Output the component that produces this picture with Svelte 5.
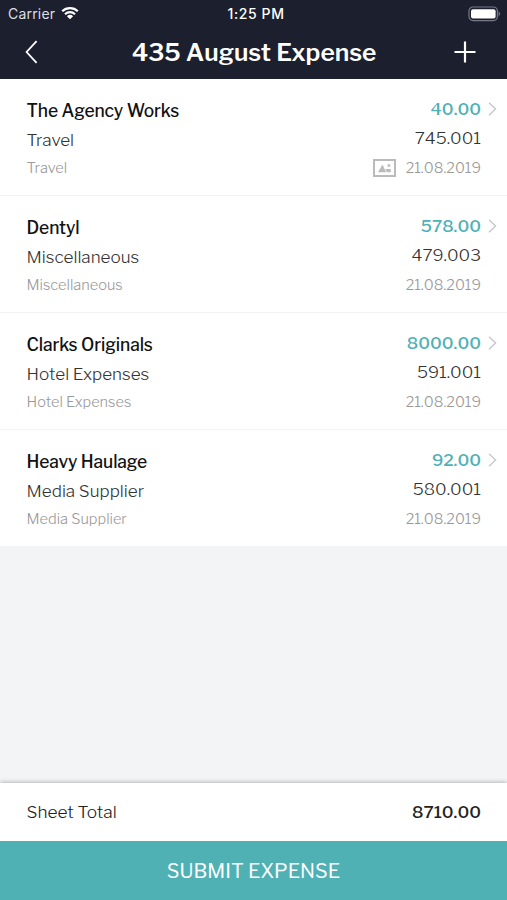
<script lang="ts">
  interface Expense {
    supplier: string;
    category: string;
    note: string;
    amount: string;
    code: string;
    date: string;
    hasImage?: boolean;
  }

  const title = '435 August Expense';

  const expenses: Expense[] = [
    { supplier: 'The Agency Works', category: 'Travel', note: 'Travel', amount: '40.00', code: '745.001', date: '21.08.2019', hasImage: true },
    { supplier: 'Dentyl', category: 'Miscellaneous', note: 'Miscellaneous', amount: '578.00', code: '479.003', date: '21.08.2019' },
    { supplier: 'Clarks Originals', category: 'Hotel Expenses', note: 'Hotel Expenses', amount: '8000.00', code: '591.001', date: '21.08.2019' },
    { supplier: 'Heavy Haulage', category: 'Media Supplier', note: 'Media Supplier', amount: '92.00', code: '580.001', date: '21.08.2019' }
  ];

  const total = expenses.reduce((sum, e) => sum + Number(e.amount), 0).toFixed(2);
</script>

<div class="screen">
  <header>
    <div class="status">
      <div class="carrier">
        <span>Carrier</span>
        <svg class="wifi" width="18" height="14" viewBox="0 0 18 14">
          <path d="M1.2 5.2a11.2 11.2 0 0 1 15.6 0M4 8.2a7.2 7.2 0 0 1 10 0" />
          <path class="dot" d="M5.9 10.2a4.6 4.6 0 0 1 6.2 0L9 13.3z" />
        </svg>
      </div>
      <span class="time">1:25 PM</span>
      <svg class="battery" width="33" height="16" viewBox="0 0 33 16">
        <rect class="case" x="1" y="1" width="28.4" height="13.6" rx="4" />
        <rect class="level" x="3" y="3.2" width="24.6" height="9.4" rx="2" />
        <path class="cap" d="M30.6 5.2q3 2.6 0 5.2z" />
      </svg>
    </div>
    <nav>
      <button class="back" aria-label="Back">
        <svg width="14" height="24" viewBox="0 0 14 24"><path d="M11.6 1.2 1.6 12l10 10.8" /></svg>
      </button>
      <h1>{title}</h1>
      <button class="add" aria-label="Add">
        <svg width="22" height="22" viewBox="0 0 22 22"><path d="M11 .5v21M.5 11h21" /></svg>
      </button>
    </nav>
  </header>

  <ul>
    {#each expenses as expense}
      <li>
        <div class="info">
          <span class="supplier">{expense.supplier}</span>
          <span class="category">{expense.category}</span>
          <span class="note">{expense.note}</span>
        </div>
        <div class="figures">
          <span class="amount">{expense.amount}</span>
          <span class="code">{expense.code}</span>
          <span class="date">
            {#if expense.hasImage}
              <svg width="23" height="18" viewBox="0 0 23 18">
                <rect x="1" y="1" width="21" height="16" />
                <path d="M5 13.2 9.4 5.4l3.8 7.8zM12.5 10h5.3v3.2h-4zM14.6 5.2h2.6v2.6h-2.6z" />
              </svg>
            {/if}
            <span>{expense.date}</span>
          </span>
        </div>
        <svg class="chevron" width="9" height="14" viewBox="0 0 9 14"><path d="m1 .8 6.6 6.2L1 13.2" /></svg>
      </li>
    {/each}
  </ul>

  <footer>
    <div class="total">
      <span class="label">Sheet Total</span>
      <span class="sum">{total}</span>
    </div>
    <button class="submit">SUBMIT EXPENSE</button>
  </footer>
</div>

<style>
  :global(body) {
    margin: 0;
  }

  .screen {
    display: flex;
    flex-direction: column;
    height: 900px;
    background: #f2f4f6;
    font-family: 'Libre Franklin', Inter, sans-serif;
    color: #222;
    overflow: hidden;
  }

  button {
    padding: 0;
    border: none;
    background: none;
    color: inherit;
    font: inherit;
  }

  svg {
    display: block;
    fill: none;
  }

  header {
    height: 79px;
    background: #1c1f2e;
    color: #fff;
  }

  .status {
    display: grid;
    grid-template-columns: 1fr auto 1fr;
    align-items: center;
    height: 28px;
    padding: 0 6px 0 8px;
    font-family: Inter, sans-serif;
    font-size: 14px;
    line-height: 28px;
  }

  .carrier {
    display: flex;
    align-items: center;
    gap: 7px;
    color: #dddfe4;
    letter-spacing: 0.2px;
  }

  .wifi {
    stroke: #fff;
    stroke-width: 2.2;
    margin: -3px 0 0 -1px;
  }

  .wifi .dot {
    fill: #fff;
    stroke: none;
  }

  .time {
    margin-right: -3px;
    font-weight: 500;
    font-size: 14px;
    letter-spacing: 0.6px;
  }

  .battery {
    justify-self: end;
  }

  .case {
    stroke: #777986;
    stroke-width: 1.2;
  }

  .level {
    fill: #fff;
  }

  .cap {
    fill: #777986;
  }

  nav {
    display: grid;
    grid-template-columns: 1fr auto 1fr;
    align-items: center;
    height: 48px;
    padding: 0 31px 0 25px;
  }

  nav svg {
    margin-top: -1px;
    stroke: #fff;
    stroke-width: 1.8;
  }

  .back {
    justify-self: start;
  }

  .add {
    justify-self: end;
  }

  .add svg {
    stroke-width: 2.2;
  }

  h1 {
    margin: 0 -7px 0 0;
    font-size: 24.5px;
    font-weight: 600;
    line-height: 48px;
  }

  ul {
    flex: 1;
    margin: 0;
    padding: 0;
    list-style: none;
  }

  li {
    display: flex;
    box-sizing: border-box;
    height: 117px;
    padding: 16px 10px 0 26.5px;
    background: #fff;
    border-bottom: 1px solid #f2f3f4;
  }

  .info,
  .figures {
    display: flex;
    flex-direction: column;
    font-size: 17px;
    line-height: 30px;
  }

  .info {
    flex: 1;
  }

  .figures {
    align-items: flex-end;
    margin-top: -1px;
  }

  .supplier {
    color: #111;
    font-size: 17.4px;
    font-weight: 500;
    line-height: 31px;
    letter-spacing: -0.1px;
  }

  .category,
  .code {
    color: #333;
    font-weight: 300;
  }

  .category {
    font-size: 17.1px;
    line-height: 28px;
  }

  .code {
    line-height: 28px;
  }

  .note,
  .date {
    color: #999;
    font-size: 14.6px;
    font-weight: 300;
    line-height: 26px;
  }

  .note {
    line-height: 28px;
  }

  .date {
    display: flex;
    align-items: center;
    gap: 10px;
    margin-top: 3px;
  }

  .date svg {
    stroke: #bbb;
    stroke-width: 2;
  }

  .date path {
    fill: #bbb;
    stroke: none;
  }

  .amount {
    color: #4db1b5;
    font-weight: 500;
  }

  .chevron {
    margin: 7px 0 0 7px;
    stroke: #c6c6c8;
    stroke-width: 1.3;
  }

  footer {
    box-shadow: 0 -1px 4px rgba(0, 0, 0, 0.25);
  }

  .total {
    display: flex;
    align-items: center;
    justify-content: space-between;
    height: 58px;
    padding: 0 26px 0 26.5px;
    background: #fff;
    font-size: 17px;
  }

  .label {
    margin-top: -1px;
    font-weight: 300;
    font-size: 17.3px;
  }

  .sum {
    font-weight: 500;
  }

  .submit {
    display: block;
    width: 100%;
    height: 59px;
    background: #50b1b5;
    color: #fff;
    font-size: 19.8px;
  }
</style>
